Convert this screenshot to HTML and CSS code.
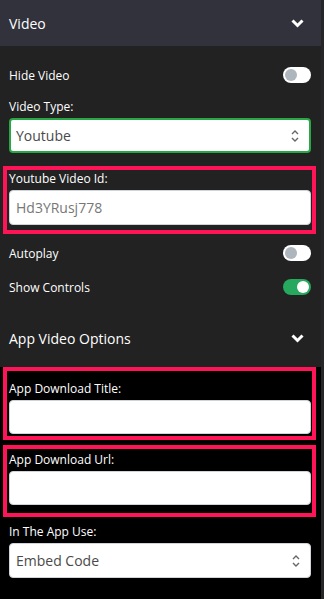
FILE: index.html
```html
<!DOCTYPE html>
<html lang="en">
<head>
  <meta charset="UTF-8">
  <meta name="viewport" content="width=device-width, initial-scale=1.0">
  <title>Video Settings</title>
  <link rel="stylesheet" href="styles.css">
</head>
<body>
  <div class="panel">
    <!-- Video header -->
    <div class="section-head">
      <span>Video</span>
      <svg class="chevron" width="13" height="9" viewBox="0 0 13 9"><polyline points="1.5,1.5 6.5,6.5 11.5,1.5" fill="none" stroke="#fff" stroke-width="3"/></svg>
    </div>

    <div class="section-body">
      <div class="switch-row first">
        <span>Hide Video</span>
        <span class="switch"></span>
      </div>

      <label class="field-label type-label">Video Type:</label>
      <div class="select green">
        <span>Youtube</span>
        <svg class="arrows" width="8" height="14" viewBox="0 0 8 14"><polyline points="1,5 4,2 7,5" fill="none" stroke="#666" stroke-width="1.4"/><polyline points="1,9 4,12 7,9" fill="none" stroke="#666" stroke-width="1.4"/></svg>
      </div>

      <div class="highlight hl-id">
        <label class="field-label">Youtube Video Id:</label>
        <input class="text-input" type="text" placeholder="Hd3YRusj778">
      </div>

      <div class="switch-row autoplay">
        <span>Autoplay</span>
        <span class="switch"></span>
      </div>
      <div class="switch-row controls">
        <span>Show Controls</span>
        <span class="switch on"></span>
      </div>

      <div class="sub-head">
        <span>App Video Options</span>
        <svg class="chevron" width="13" height="9" viewBox="0 0 13 9"><polyline points="1.5,1.5 6.5,6.5 11.5,1.5" fill="none" stroke="#fff" stroke-width="3"/></svg>
      </div>
    </div>

    <!-- App options -->
    <div class="app-body">
      <div class="highlight hl-title">
        <label class="field-label">App Download Title:</label>
        <input class="text-input" type="text">
      </div>
      <div class="highlight hl-url">
        <label class="field-label">App Download Url:</label>
        <input class="text-input" type="text">
      </div>

      <label class="field-label use-label">In The App Use:</label>
      <div class="select">
        <span>Embed Code</span>
        <svg class="arrows" width="8" height="14" viewBox="0 0 8 14"><polyline points="1,5 4,2 7,5" fill="none" stroke="#666" stroke-width="1.4"/><polyline points="1,9 4,12 7,9" fill="none" stroke="#666" stroke-width="1.4"/></svg>
      </div>
    </div>
  </div>
</body>
</html>
```

FILE: styles.css
```css
/* Reset */
* {
  margin: 0;
  padding: 0;
  box-sizing: border-box;
  font-family: "Open Sans", sans-serif;
}

body {
  width: 324px;
  height: 599px;
  overflow: hidden;
  background-color: #262628;
}

.panel {
  width: 321px;
  height: 599px;
  display: flex;
  flex-direction: column;
}

/* Header */
.section-head {
  height: 46px;
  display: flex;
  justify-content: space-between;
  align-items: center;
  padding: 0 17px 0 9px;
  background-color: #31323b;
  color: #fff;
  font-size: 14px;
}

.section-body {
  background-color: #222;
  padding: 0 10px 0 9px;
  height: 321px;
}

.app-body {
  flex: 1;
  background-color: #000;
  padding: 0 10px 0 9px;
}

/* Rows with switches */
.switch-row {
  height: 16px;
  display: flex;
  justify-content: space-between;
  align-items: center;
  color: #fff;
  font-size: 12px;
}

.switch-row.first {
  margin-top: 21px;
}

.switch-row.autoplay {
  margin-top: 11px;
}

.switch-row.controls {
  margin-top: 18px;
}

.switch {
  width: 28px;
  height: 16px;
  border-radius: 8px;
  background-color: #fff;
  position: relative;
}

.switch::after {
  content: "";
  position: absolute;
  top: 2px;
  left: 2px;
  width: 12px;
  height: 12px;
  border-radius: 50%;
  background-color: #adb5bd;
}

.switch.on {
  background-color: #27a85f;
}

.switch.on::after {
  left: 14px;
  background-color: #fff;
}

/* Labels and inputs */
.field-label {
  display: block;
  height: 16px;
  line-height: 16px;
  color: #fff;
  font-size: 12px;
}

.type-label {
  margin-top: 16px;
}

.select {
  margin-top: 3px;
  height: 35px;
  display: flex;
  justify-content: space-between;
  align-items: center;
  padding: 0 10px 0 6px;
  background-color: #fff;
  border: 1px solid #ced4da;
  border-radius: 4px;
  color: #4a4a4a;
  font-size: 14px;
}

.select.green {
  border: 2px solid #28a745;
  padding-left: 5px;
}

.text-input {
  display: block;
  width: 100%;
  margin-top: 3px;
  height: 35px;
  padding: 0 6px;
  border: 1px solid #ced4da;
  border-radius: 4px;
  font-size: 14px;
  color: #4a4a4a;
}

.text-input::placeholder {
  color: #777;
}

/* Pink highlight boxes */
.highlight {
  margin: 0 -5px 0 -6px;
  border: 4px solid #ff1457;
  padding: 1px 1px 5px 2px;
}

.hl-id {
  margin-top: 13px;
}

.hl-title {
  padding-top: 10px;
  padding-bottom: 2px;
}

.hl-title .text-input {
  height: 34px;
}

.hl-url {
  margin-top: 5px;
  padding-top: 3px;
  padding-bottom: 8px;
}

.hl-url .text-input {
  height: 34px;
}

.use-label {
  margin-top: 7px;
}

/* App Video Options */
.sub-head {
  margin-top: 28px;
  height: 30px;
  display: flex;
  justify-content: space-between;
  align-items: center;
  padding-right: 7px;
  color: #fff;
  font-size: 14px;
}
```
